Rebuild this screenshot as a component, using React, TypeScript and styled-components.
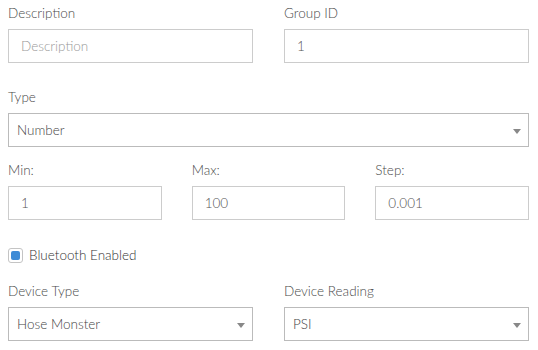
import styled, { createGlobalStyle } from "styled-components"

const GlobalStyle = createGlobalStyle`
    body{
        margin: 0;
        background: #fff;
        font-family: Lato, "Open Sans", sans-serif;
    }
`

export default function App(){
    return(
        <>
            <GlobalStyle/>
            <Form>
                <Row $cols={2} $gap={31}>
                    <Field>
                        <Label>Description</Label>
                        <Input placeholder="Description"/>
                    </Field>
                    <Field>
                        <Label>Group ID</Label>
                        <Input defaultValue="1"/>
                    </Field>
                </Row>

                <Section $top={25}>
                    <Field>
                        <Label>Type</Label>
                        <Select value="Number"/>
                    </Field>
                </Section>

                <Row $cols={3} $gap={30} $top={14}>
                    <Field>
                        <Label>Min:</Label>
                        <Input defaultValue="1"/>
                    </Field>
                    <Field>
                        <Label>Max:</Label>
                        <Input defaultValue="100"/>
                    </Field>
                    <Field>
                        <Label>Step:</Label>
                        <Input defaultValue="0.001"/>
                    </Field>
                </Row>

                <CheckRow $top={26}>
                    <CheckBox><CheckFill/></CheckBox>
                    Bluetooth Enabled
                </CheckRow>

                <Row $cols={2} $gap={31} $top={18}>
                    <Field>
                        <Label>Device Type</Label>
                        <Select value="Hose Monster"/>
                    </Field>
                    <Field>
                        <Label>Device Reading</Label>
                        <Select value="PSI"/>
                    </Field>
                </Row>
            </Form>
        </>
    )
}

function Select({value}:{value:string}){
    return(
        <SelectBox>
            <span>{value}</span>
            <Caret/>
        </SelectBox>
    )
}

const Form = styled.form`
    display: flex;
    flex-direction: column;
    padding: 4px 9px 0 8px;
    color: #555;
    font-size: 13.5px;
    font-weight: 300;
`
const Section = styled.div<{$top?: number}>`
    margin-top: ${p => p.$top ?? 0}px;
`
const Row = styled.div<{$cols: number, $gap: number, $top?: number}>`
    display: grid;
    grid-template-columns: repeat(${p => p.$cols}, 1fr);
    column-gap: ${p => p.$gap}px;
    margin-top: ${p => p.$top ?? 0}px;
`
const Field = styled.div`
    display: flex;
    flex-direction: column;
`
const Label = styled.label`
    line-height: 18px;
    margin-bottom: 7px;
    color: #4a4a4a;
`
const Input = styled.input`
    display: block;
    box-sizing: border-box;
    width: 100%;
    height: 34px;
    margin: 0;
    padding: 0 12px;
    border: 1px solid #ccc;
    border-radius: 0;
    font-family: inherit;
    font-size: 13.5px;
    font-weight: 300;
    color: #555;
    outline: none;
    &::placeholder{
        color: #999;
    }
`
const SelectBox = styled.div`
    box-sizing: border-box;
    height: 34px;
    display: flex;
    align-items: center;
    justify-content: space-between;
    padding: 0 7px 0 8px;
    border: 1px solid #bbb;
    color: #444;
`
const Caret = styled.span`
    width: 0;
    height: 0;
    margin-top: 3px;
    border-left: 4px solid transparent;
    border-right: 4px solid transparent;
    border-top: 5px solid #888;
`
const CheckRow = styled.div<{$top?: number}>`
    display: flex;
    align-items: center;
    gap: 6px;
    height: 18px;
    margin-top: ${p => p.$top ?? 0}px;
    color: #333;
`
const CheckBox = styled.span`
    box-sizing: border-box;
    width: 15px;
    height: 15px;
    border: 1px solid #c4c4c4;
    border-radius: 3px;
    display: flex;
    align-items: center;
    justify-content: center;
`
const CheckFill = styled.span`
    width: 9px;
    height: 9px;
    border-radius: 2px;
    background: #3e8bd6;
`
